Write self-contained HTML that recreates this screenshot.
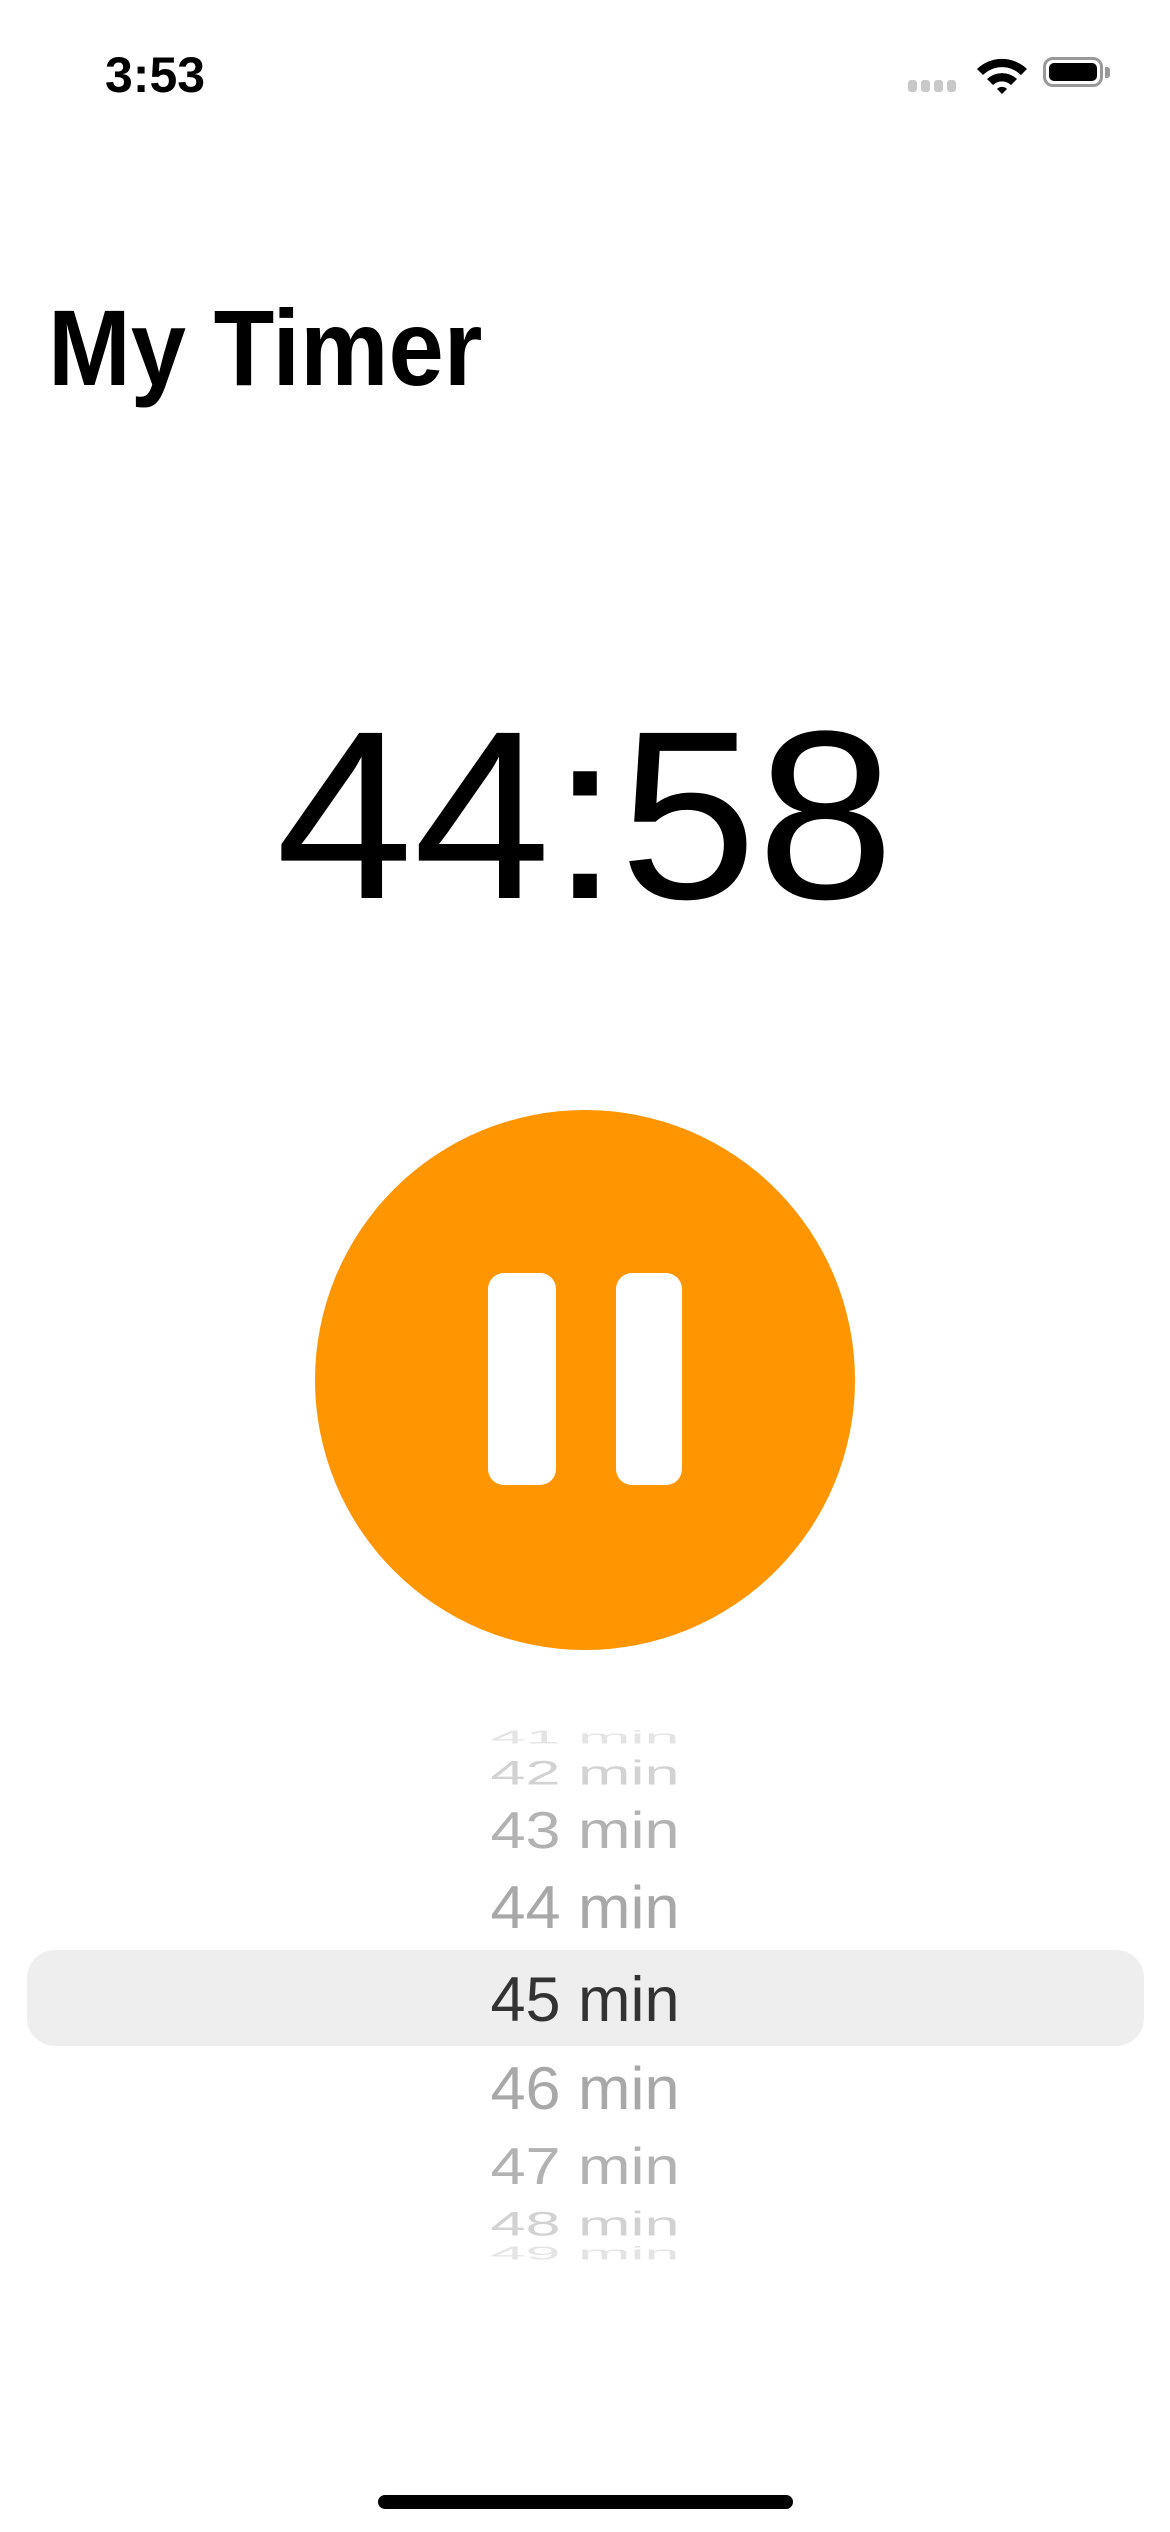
<!DOCTYPE html>
<html><head><meta charset="utf-8"><style>
html,body{margin:0;padding:0;background:#fff;}
body{width:1170px;height:2532px;position:relative;overflow:hidden;font-family:"Liberation Sans",sans-serif;}
.a{position:absolute;white-space:nowrap;}
.row{position:absolute;left:0;width:1170px;text-align:center;font-size:63px;line-height:66px;height:66px;}
</style></head><body>
<div class="a" style="left:105px;top:50px;font-size:50px;line-height:50px;font-weight:bold;color:#000;">3:53</div>
<div class="a" style="left:908px;top:80px;">
 <span style="position:absolute;left:0;width:9px;height:12px;border-radius:3px;background:#c8c8c8"></span>
 <span style="position:absolute;left:13px;width:9px;height:12px;border-radius:3px;background:#c8c8c8"></span>
 <span style="position:absolute;left:26px;width:9px;height:12px;border-radius:3px;background:#c8c8c8"></span>
 <span style="position:absolute;left:39px;width:9px;height:12px;border-radius:3px;background:#c8c8c8"></span>
</div>
<svg class="a" style="left:975px;top:56px" width="54" height="38" viewBox="0 0 54 38">
 <path d="M2 13 A36 36 0 0 1 52 13 L46 19 A27 27 0 0 0 8 19 Z" fill="#000"/>
 <path d="M12 23 A22 22 0 0 1 42 23 L36 29 A13 13 0 0 0 18 29 Z" fill="#000"/>
 <path d="M22 33 A7 7 0 0 1 32 33 L27 38 Z" fill="#000"/>
</svg>
<div class="a" style="left:1043px;top:57px;width:60px;height:30px;border:3px solid #999;border-radius:10px;box-sizing:border-box;"></div>
<div class="a" style="left:1049px;top:63px;width:48px;height:18px;background:#000;border-radius:5px;"></div>
<div class="a" style="left:1105px;top:67px;width:5px;height:11px;background:#999;border-radius:0 3px 3px 0;"></div>

<div class="a" style="left:48px;top:294px;font-size:108px;line-height:108px;font-weight:bold;color:#000;transform:scaleX(0.92);transform-origin:0 0;">My Timer</div>
<div class="a" style="left:0;width:1170px;text-align:center;top:695px;font-size:240px;line-height:240px;color:#000;transform:scaleX(1.03);">44:58</div>

<div class="a" style="left:315px;top:1110px;width:540px;height:540px;border-radius:50%;background:#FF9500;"></div>
<div class="a" style="left:488px;top:1273px;width:68px;height:212px;border-radius:16px;background:#fff;"></div>
<div class="a" style="left:616px;top:1273px;width:66px;height:212px;border-radius:16px;background:#fff;"></div>

<div class="a" style="left:27px;top:1950px;width:1117px;height:96px;border-radius:28px;background:#eeeeef;"></div>
<div class="row" style="top:1704px;color:#e4e4e4;transform:scaleY(.3);">41 min</div>
<div class="row" style="top:1740px;color:#d2d2d2;transform:scaleY(.55);">42 min</div>
<div class="row" style="top:1798px;color:#b2b2b2;transform:scaleY(.82);">43 min</div>
<div class="row" style="top:1875px;color:#a8a8a8;transform:scaleY(.96);">44 min</div>
<div class="row" style="top:1967px;color:#333;">45 min</div>
<div class="row" style="top:2056px;color:#a8a8a8;transform:scaleY(.96);">46 min</div>
<div class="row" style="top:2134px;color:#b2b2b2;transform:scaleY(.82);">47 min</div>
<div class="row" style="top:2191px;color:#d2d2d2;transform:scaleY(.55);">48 min</div>
<div class="row" style="top:2220px;color:#e4e4e4;transform:scaleY(.3);">49 min</div>

<div class="a" style="left:378px;top:2495px;width:415px;height:14px;border-radius:7px;background:#000;"></div>
</body></html>
